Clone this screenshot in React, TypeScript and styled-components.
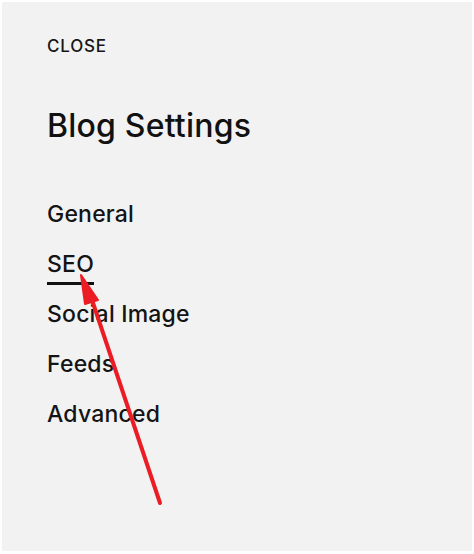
import React from "react";
import styled, { createGlobalStyle } from "styled-components";

const Global = createGlobalStyle`
  html, body { margin: 0; padding: 0; background: #ffffff; }
  body { font-family: Inter, "Liberation Sans", Arial, sans-serif; color: #111111; }
`;

const Frame = styled.div`
  width: 474px;
  height: 554px;
  box-sizing: border-box;
  padding: 2px 2px 3px 2px;
  background: #ffffff;
`;

const Panel = styled.div`
  position: relative;
  height: 100%;
  background: #f2f2f2;
  box-sizing: border-box;
  padding: 34px 0 0 45px;
  display: flex;
  flex-direction: column;
`;

const CloseLink = styled.span`
  font-size: 17px;
  font-weight: 500;
  letter-spacing: 0.8px;
  line-height: 20px;
  color: #161616;
`;

const Title = styled.h1`
  margin: 51px 0 0 0;
  font-size: 32px;
  font-weight: 500;
  line-height: 38px;
  letter-spacing: 0.2px;
  color: #111111;
`;

const Nav = styled.nav`
  margin-top: 55px;
  display: flex;
  flex-direction: column;
  gap: 22px;
`;

const NavItem = styled.span<{ $active?: boolean }>`
  align-self: flex-start;
  font-size: 23px;
  font-weight: 500;
  line-height: 28px;
  letter-spacing: 0.2px;
  color: #141414;
  border-bottom: 3px solid ${(p) => (p.$active ? "#111111" : "transparent")};
  padding-bottom: 4px;
  margin-bottom: -7px;
`;

const ArrowLayer = styled.svg`
  position: absolute;
  left: 0;
  top: 0;
  pointer-events: none;
`;

const items = ["General", "SEO", "Social Image", "Feeds", "Advanced"];

export default function App() {
  return (
    <>
      <Global />
      <Frame>
        <Panel>
          <CloseLink>CLOSE</CloseLink>
          <Title>Blog Settings</Title>
          <Nav>
            {items.map((it) => (
              <NavItem key={it} $active={it === "SEO"}>
                {it}
              </NavItem>
            ))}
          </Nav>
          <ArrowLayer width="472" height="549" viewBox="0 0 472 549">
            <line x1="158" y1="501" x2="88" y2="292" stroke="#ec1c24" strokeWidth="4" strokeLinecap="round" />
            <polygon points="79,273 96,298 83,302" fill="#ec1c24" stroke="#ec1c24" strokeWidth="2" strokeLinejoin="round" />
          </ArrowLayer>
        </Panel>
      </Frame>
    </>
  );
}
